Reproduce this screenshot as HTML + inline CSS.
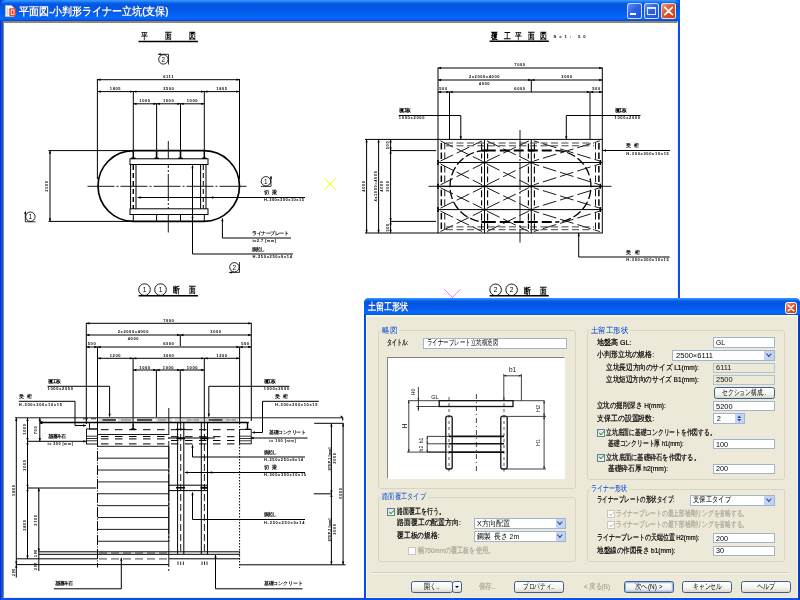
<!DOCTYPE html>
<html lang="ja"><head><meta charset="utf-8"><title>平面図</title>
<style>
*{box-sizing:border-box}
html,body{margin:0;padding:0}
body{will-change:transform;width:800px;height:600px;overflow:hidden;background:#fff;position:relative;font-family:"Liberation Sans",sans-serif;font-size:8px;color:#000}
.abs{position:absolute}
#win{position:absolute;left:0;top:0;width:680.3px;height:600px;background:linear-gradient(to right,#0019cf 0,#0a50ea 1.2px,#0a5df0 2px,#0a50ea 3px)}
#wtitle{position:absolute;left:0;top:0;width:680.3px;height:21.4px;border-radius:6px 6px 0 0;
 background:linear-gradient(to bottom,#3c96ff 0,#2c8aff 1.2px,#0a6af0 2.6px,#0355dd 4.6px,#0357e4 8px,#045ff0 14px,#0468fc 17px,#0466fa 19px,#0350e0 20.2px,#0340c8 21.4px)}
#wtitle .txt{position:absolute;left:19px;top:4.8px;color:#fff;font-weight:bold;font-size:10.5px;white-space:nowrap;filter:drop-shadow(0.8px 0.8px 0 #0a2a8a)}
#wclient{position:absolute;left:3px;top:21px;width:674.5px;height:576.5px;background:#fff;border-left:1.5px solid #8a8772;border-top:2px solid #8a8772;border-right:1px solid #f3f0e0;border-bottom:1px solid #f3f0e0}
.cb{position:absolute;top:3.4px;width:15px;height:15.3px;border:1px solid rgba(255,255,255,.75);border-radius:2.5px;background:linear-gradient(135deg,#5f8ff8 0%,#2f62e6 45%,#2350d8 100%)}
.cb.x{background:linear-gradient(135deg,#f0a080 0%,#e0552c 45%,#c83c14 100%)}
#cad{position:absolute;left:0;top:0}
#cad text{font-family:"Liberation Sans",sans-serif}
/* dialog */
#dlg{position:absolute;left:364px;top:297.7px;width:436px;height:302.3px;background:linear-gradient(to right,#0a3fdc 0,#0a50ea 1.5px,#0a50ea 433.5px,#0630c0 436px);border-radius:5px 5px 0 0}
#dtitle{position:absolute;left:0;top:0;width:100%;height:17.7px;border-radius:5px 5px 0 0;
 background:linear-gradient(to bottom,#3c96ff 0,#2c8aff 1px,#0a6af0 2.2px,#0355dd 4px,#0357e4 7px,#045ff0 11.5px,#0468fc 14px,#0466fa 16px,#0350e0 17px,#0340c8 18px)}
#dtitle .txt{position:absolute;left:4px;top:3px;color:#fff;font-weight:bold;font-size:10px;white-space:nowrap;filter:drop-shadow(0.8px 0.8px 0 #0a2a8a)}
#dbody{position:absolute;left:2.2px;top:17.7px;right:2.1px;bottom:2.3px;background:#ece9d8;border-top:2px solid #fbf7d6;border-left:1px solid #fbf7d6;border-right:0.8px solid #f6f2da;border-bottom:0.8px solid #f6f2da}
.grp{position:absolute;border:1px solid #d6d4c2;border-radius:3px}
.gl{position:absolute;color:#0046d5;background:#ece9d8;white-space:nowrap;padding:0 1.5px;line-height:10px;height:10px;overflow:visible}
.lb{position:absolute;white-space:nowrap;line-height:10px;height:10px;}
.lb.dis{color:#aca899}
svg.sx,svg.sc{overflow:visible;display:block}
svg.sc{display:inline-block;vertical-align:top}
.in svg.sx,.cmb svg.sx{margin-top:-0.6px}
.lb svg text{stroke:currentColor;stroke-width:0.2px}
svg.sx text,svg.sc text{fill:currentColor;font-family:"Liberation Sans",sans-serif;font-size:8px}
.in{position:absolute;background:#fff;border:1px solid #a0b5c9;height:10.5px;line-height:8.6px;padding-left:2.5px;font-size:8px;white-space:nowrap;overflow:hidden}
.in.dis{background:#ece9d8;border-color:#b3c3d3;color:#111}
.cmb{position:absolute;background:#fff;border:1px solid #a0b5c9;height:11px;line-height:9px;padding-left:2.5px;font-size:8px;white-space:nowrap;overflow:hidden}
.cmb i{position:absolute;right:0;top:0;bottom:0;width:9.4px;background:#c3d3fb}
.cmb i:after{content:"";position:absolute;left:2.5px;top:0.6px;width:2.7px;height:2.7px;border-right:1.7px solid #3b4a6b;border-bottom:1.7px solid #3b4a6b;transform:rotate(45deg)}
.btn{position:absolute;height:11.5px;border:1px solid #3d5f8c;border-radius:2.5px;background:linear-gradient(to bottom,#fff 0%,#f4f3ee 60%,#dcd8cb 100%);text-align:center;line-height:9.6px;font-size:8px;white-space:nowrap}
.btn.def{box-shadow:inset 0 0 0 1.2px #9fbdf0}
.chk{position:absolute;width:8px;height:8px;border:1px solid #5f7fa8;background:linear-gradient(135deg,#dcdcd7,#fff)}
.chk.on:after{content:"";position:absolute;left:1.7px;top:-0.2px;width:2.2px;height:4.2px;border-right:1.5px solid #21a121;border-bottom:1.5px solid #21a121;transform:rotate(42deg)}
.chk.dis{border-color:#cac8bb;background:#fff}
.chk.dis.on:after{border-color:#cac8bb}
</style></head><body>
<div class="abs" style="left:0;top:0;width:680.3px;height:8px;background:#10309a"></div>
<div id="win">
 <div id="wtitle">
  <svg class="abs" style="left:5px;top:5px" width="12" height="12" viewBox="0 0 12 12"><path d="M0.5,0.5 H6.5 L9,3 V11.5 H0.5Z" fill="#fff" stroke="#c9c9c9" stroke-width="0.6"/><rect x="4.3" y="3.2" width="6.6" height="8" rx="1" fill="#e8452a"/><rect x="6.2" y="5" width="2.8" height="4.4" fill="none" stroke="#fff" stroke-width="0.8"/><rect x="1.6" y="2.5" width="1.6" height="8" fill="#d8d8d8"/></svg>
  <div class="txt"><svg class="sx" width="149.5" height="13"><text x="0" y="9.6" textLength="149.5" lengthAdjust="spacingAndGlyphs" style="font-size:10.5px;font-weight:bold">平面図-小判形ライナー立坑(支保)</text></svg></div>
  <div class="cb" style="left:627.1px"><div class="abs" style="left:2.2px;top:8.3px;width:6px;height:2.6px;background:#fff"></div></div>
  <div class="cb" style="left:644px"><div class="abs" style="left:2.2px;top:2.8px;width:8.8px;height:8px;border:1px solid rgba(255,255,255,.85);border-top-width:2.2px"></div></div>
  <div class="cb x" style="left:660.9px"><svg class="abs" style="left:0;top:0" width="13" height="13.3" viewBox="0 0 13 13.3"><path d="M2.8,3.4 L10.4,10.6 M10.4,3.4 L2.8,10.6" stroke="#fff" stroke-width="1.7" stroke-linecap="round"/></svg></div>
 </div>
 <div id="wclient"></div>
</div>
<svg id="cad" width="800" height="600" viewBox="0 0 800 600">
<defs><clipPath id="cc"><rect x="5.5" y="24.5" width="671" height="572"/></clipPath></defs>
<g clip-path="url(#cc)">
<text x="140.6" y="38.6" font-size="9" text-anchor="start" font-weight="bold" textLength="6.8" lengthAdjust="spacingAndGlyphs" fill="#000">平</text>
<text x="164.8" y="38.6" font-size="9" text-anchor="start" font-weight="bold" textLength="6.8" lengthAdjust="spacingAndGlyphs" fill="#000">面</text>
<text x="189.2" y="38.6" font-size="9" text-anchor="start" font-weight="bold" textLength="6.8" lengthAdjust="spacingAndGlyphs" fill="#000">図</text>
<line x1="138.5" y1="41.4" x2="198" y2="41.4" stroke="#000" stroke-width="1.5"/>
<circle cx="163.4" cy="59.4" r="4.7" fill="#fff" stroke="#000" stroke-width="0.85"/>
<text x="163.4" y="61.6" font-size="6.4" text-anchor="middle" fill="#000">2</text>
<path d="M158.3,54.3 H168.5 V64.5" fill="none" stroke="#000" stroke-width="0.8"/>
<polygon points="157.8,54.3 160.8,53.3 160.8,55.3" fill="#000"/>
<line x1="97.4" y1="79.7" x2="239.5" y2="79.7" stroke="#000" stroke-width="1"/>
<polygon points="97.4,79.7 100.6,78.55 100.6,80.85" fill="#000"/>
<polygon points="239.5,79.7 236.3,78.55 236.3,80.85" fill="#000"/>
<text x="168.6" y="77.9" font-size="4" text-anchor="middle" font-weight="bold" letter-spacing="0.6" fill="#000">6111</text>
<line x1="97.4" y1="91.6" x2="239.5" y2="91.6" stroke="#000" stroke-width="1"/>
<polygon points="97.4,91.6 100.6,90.45 100.6,92.75" fill="#000"/>
<polygon points="239.5,91.6 236.3,90.45 236.3,92.75" fill="#000"/>
<polygon points="133.3,91.6 130.1,90.45 130.1,92.75" fill="#000"/>
<polygon points="133.3,91.6 136.5,90.45 136.5,92.75" fill="#000"/>
<polygon points="204.3,91.6 201.1,90.45 201.1,92.75" fill="#000"/>
<polygon points="204.3,91.6 207.5,90.45 207.5,92.75" fill="#000"/>
<text x="115.5" y="89.8" font-size="4" text-anchor="middle" font-weight="bold" letter-spacing="0.6" fill="#000">1805</text>
<text x="168.8" y="89.8" font-size="4" text-anchor="middle" font-weight="bold" letter-spacing="0.6" fill="#000">2500</text>
<text x="222" y="89.8" font-size="4" text-anchor="middle" font-weight="bold" letter-spacing="0.6" fill="#000">1805</text>
<line x1="133.3" y1="103.8" x2="204.3" y2="103.8" stroke="#000" stroke-width="1"/>
<polygon points="133.3,103.8 136.5,102.65 136.5,104.95" fill="#000"/>
<polygon points="204.3,103.8 201.1,102.65 201.1,104.95" fill="#000"/>
<polygon points="156.6,103.8 153.4,102.65 153.4,104.95" fill="#000"/>
<polygon points="156.6,103.8 159.8,102.65 159.8,104.95" fill="#000"/>
<polygon points="180.5,103.8 177.3,102.65 177.3,104.95" fill="#000"/>
<polygon points="180.5,103.8 183.7,102.65 183.7,104.95" fill="#000"/>
<text x="145" y="102.3" font-size="4" text-anchor="middle" font-weight="bold" letter-spacing="0.6" fill="#000">1000</text>
<text x="168.6" y="102.3" font-size="4" text-anchor="middle" font-weight="bold" letter-spacing="0.6" fill="#000">1000</text>
<text x="192.4" y="102.3" font-size="4" text-anchor="middle" font-weight="bold" letter-spacing="0.6" fill="#000">1000</text>
<line x1="97.4" y1="79" x2="97.4" y2="179" stroke="#000" stroke-width="1"/>
<line x1="239.5" y1="79" x2="239.5" y2="179" stroke="#000" stroke-width="1"/>
<line x1="133.3" y1="91" x2="133.3" y2="150.5" stroke="#000" stroke-width="1"/>
<line x1="204.3" y1="91" x2="204.3" y2="150.5" stroke="#000" stroke-width="1"/>
<line x1="156.6" y1="103.5" x2="156.6" y2="151" stroke="#000" stroke-width="1"/>
<line x1="180.5" y1="103.5" x2="180.5" y2="151" stroke="#000" stroke-width="1"/>
<line x1="50" y1="150.6" x2="50" y2="221.4" stroke="#000" stroke-width="1"/>
<polygon points="50,150.6 48.85,153.8 51.15,153.8" fill="#000"/>
<polygon points="50,221.4 48.85,218.2 51.15,218.2" fill="#000"/>
<line x1="48.5" y1="150.6" x2="133" y2="150.6" stroke="#000" stroke-width="1"/>
<line x1="48.5" y1="221.4" x2="133" y2="221.4" stroke="#000" stroke-width="1"/>
<text x="48.1" y="186" font-size="4" text-anchor="middle" font-weight="bold" letter-spacing="0.6" transform="rotate(-90 48.1 186)" fill="#000">2500</text>
<circle cx="30.4" cy="216.7" r="4.7" fill="#fff" stroke="#000" stroke-width="0.85"/>
<text x="30.4" y="218.9" font-size="6.4" text-anchor="middle" fill="#000">1</text>
<path d="M25.3,211.6 V221.8 H35.5" fill="none" stroke="#000" stroke-width="0.8"/>
<polygon points="25.3,211.1 24.3,214.1 26.3,214.1" fill="#000"/>
<path d="M133.4,150.6 H204.1 A35.4,35.4 0 0 1 204.1,221.4 H133.4 A35.4,35.4 0 0 1 133.4,150.6 Z" fill="none" stroke="#000" stroke-width="1.7"/>
<line x1="68.5" y1="186.3" x2="248.5" y2="186.3" stroke="#000" stroke-width="0.9" stroke-dasharray="0 19 27 2 2 2 27 2 2 2 27 2 2 2 27 2 2 2 27 2 2 2 27 2 2 2"/>
<line x1="168.3" y1="121" x2="168.3" y2="232.5" stroke="#000" stroke-width="0.9" stroke-dasharray="0 20 27 2 2 2 27 2 2 2 27 2 2 2 27 2 2 2"/>
<rect x="130" y="158.8" width="78" height="5.7" fill="#fff" stroke="#000" stroke-width="1"/>
<rect x="130" y="208.8" width="78" height="5.7" fill="#fff" stroke="#000" stroke-width="1"/>
<line x1="130.6" y1="164.5" x2="130.6" y2="208.8" stroke="#000" stroke-width="1"/>
<line x1="136" y1="164.5" x2="136" y2="208.8" stroke="#000" stroke-width="1"/>
<line x1="200.6" y1="164.5" x2="200.6" y2="208.8" stroke="#000" stroke-width="1"/>
<line x1="206" y1="164.5" x2="206" y2="208.8" stroke="#000" stroke-width="1"/>
<line x1="133.3" y1="165" x2="133.3" y2="208.5" stroke="#000" stroke-width="1.4" stroke-dasharray="5 3"/>
<line x1="203.3" y1="165" x2="203.3" y2="208.5" stroke="#000" stroke-width="1" stroke-dasharray="5 3"/>
<line x1="133.3" y1="151" x2="133.3" y2="158.8" stroke="#000" stroke-width="1.5"/>
<line x1="133.3" y1="214.5" x2="133.3" y2="221" stroke="#000" stroke-width="1"/>
<line x1="131.1" y1="158.3" x2="135.5" y2="158.3" stroke="#000" stroke-width="1.4"/>
<line x1="204.3" y1="151" x2="204.3" y2="158.8" stroke="#000" stroke-width="1.5"/>
<line x1="204.3" y1="214.5" x2="204.3" y2="221" stroke="#000" stroke-width="1"/>
<line x1="202.1" y1="158.3" x2="206.5" y2="158.3" stroke="#000" stroke-width="1.4"/>
<line x1="156.6" y1="151" x2="156.6" y2="158.8" stroke="#000" stroke-width="1.6"/>
<line x1="156.6" y1="214.5" x2="156.6" y2="221" stroke="#000" stroke-width="1"/>
<line x1="154.4" y1="158.3" x2="158.8" y2="158.3" stroke="#000" stroke-width="1.4"/>
<line x1="180.5" y1="151" x2="180.5" y2="158.8" stroke="#000" stroke-width="1.6"/>
<line x1="180.5" y1="214.5" x2="180.5" y2="221" stroke="#000" stroke-width="1"/>
<line x1="178.3" y1="158.3" x2="182.7" y2="158.3" stroke="#000" stroke-width="1.4"/>
<line x1="137.5" y1="197.5" x2="305" y2="197.5" stroke="#000" stroke-width="1"/>
<polygon points="137.5,197.5 140.7,196.35 140.7,198.65" fill="#000"/>
<polygon points="210,197.5 213.2,196.35 213.2,198.65" fill="#000"/>
<line x1="192.5" y1="165.5" x2="192.5" y2="254" stroke="#000" stroke-width="1"/>
<polygon points="192.5,165 191.35,168.2 193.65,168.2" fill="#000"/>
<polygon points="192.5,215 191.35,218.2 193.65,218.2" fill="#000"/>
<line x1="192.5" y1="254" x2="293" y2="254" stroke="#000" stroke-width="1"/>
<line x1="222.4" y1="218.5" x2="222.4" y2="238" stroke="#000" stroke-width="1"/>
<polygon points="222.4,218 221.25,221.2 223.55,221.2" fill="#000"/>
<line x1="222.4" y1="238" x2="291" y2="238" stroke="#000" stroke-width="1"/>
<circle cx="265.9" cy="181.3" r="4.7" fill="#fff" stroke="#000" stroke-width="0.85"/>
<text x="265.9" y="183.5" font-size="6.4" text-anchor="middle" fill="#000">1</text>
<path d="M271,176.2 V186.4 H260.8" fill="none" stroke="#000" stroke-width="0.8"/>
<polygon points="271,175.7 270,178.7 272,178.7" fill="#000"/>
<circle cx="234.4" cy="267.3" r="4.7" fill="#fff" stroke="#000" stroke-width="0.85"/>
<text x="234.4" y="269.5" font-size="6.4" text-anchor="middle" fill="#000">2</text>
<path d="M229.3,272.4 H239.5 V262.2" fill="none" stroke="#000" stroke-width="0.8"/>
<polygon points="228.8,272.4 231.8,271.4 231.8,273.4" fill="#000"/>
<text x="264" y="194.4" font-size="5.4" text-anchor="start" font-weight="bold" fill="#000">切</text>
<text x="272" y="194.4" font-size="5.4" text-anchor="start" font-weight="bold" fill="#000">梁</text>
<text x="264" y="200.6" font-size="4" text-anchor="start" font-weight="bold" textLength="40" lengthAdjust="spacing" fill="#000">H-300x300x10x15</text>
<text x="252.4" y="234.8" font-size="5.2" text-anchor="start" font-weight="bold" textLength="36.6" lengthAdjust="spacing" fill="#000">ライナープレート</text>
<text x="252.4" y="241.9" font-size="4" text-anchor="start" font-weight="bold" textLength="23.6" lengthAdjust="spacing" fill="#000">t=2.7 [mm]</text>
<text x="252.4" y="250.6" font-size="5.2" text-anchor="start" font-weight="bold" textLength="12.6" lengthAdjust="spacing" fill="#000">腹起し</text>
<text x="252.4" y="257.7" font-size="4" text-anchor="start" font-weight="bold" textLength="39.6" lengthAdjust="spacing" fill="#000">H-250x250x9x14</text>
<line x1="324" y1="178" x2="336" y2="190" stroke="#ffff00" stroke-width="1"/>
<line x1="336" y1="178" x2="324" y2="190" stroke="#ffff00" stroke-width="1"/>
<line x1="444.4" y1="289.4" x2="460.4" y2="305.4" stroke="#ff70ff" stroke-width="1"/>
<line x1="460.4" y1="289.4" x2="444.4" y2="305.4" stroke="#ff70ff" stroke-width="1"/>
<text x="490.6" y="39" font-size="9" text-anchor="start" font-weight="bold" textLength="6.8" lengthAdjust="spacingAndGlyphs" fill="#000">覆</text>
<text x="503.6" y="39" font-size="9" text-anchor="start" font-weight="bold" textLength="6.8" lengthAdjust="spacingAndGlyphs" fill="#000">工</text>
<text x="515.2" y="39" font-size="9" text-anchor="start" font-weight="bold" textLength="6.8" lengthAdjust="spacingAndGlyphs" fill="#000">平</text>
<text x="527.8" y="39" font-size="9" text-anchor="start" font-weight="bold" textLength="6.8" lengthAdjust="spacingAndGlyphs" fill="#000">面</text>
<text x="539.6" y="39" font-size="9" text-anchor="start" font-weight="bold" textLength="6.8" lengthAdjust="spacingAndGlyphs" fill="#000">図</text>
<line x1="489.6" y1="41.2" x2="548.8" y2="41.2" stroke="#000" stroke-width="1.5"/>
<text x="553.6" y="38.2" font-size="4.2" text-anchor="start" font-weight="bold" textLength="32" lengthAdjust="spacing" fill="#000">S=1: 50</text>
<line x1="438" y1="68" x2="602.3" y2="68" stroke="#000" stroke-width="1"/>
<polygon points="438,68 441.2,66.85 441.2,69.15" fill="#000"/>
<polygon points="602.3,68 599.1,66.85 599.1,69.15" fill="#000"/>
<text x="520" y="66.4" font-size="4" text-anchor="middle" font-weight="bold" letter-spacing="0.6" fill="#000">7000</text>
<line x1="438" y1="80" x2="602.3" y2="80" stroke="#000" stroke-width="1"/>
<polygon points="438,80 441.2,78.85 441.2,81.15" fill="#000"/>
<polygon points="602.3,80 599.1,78.85 599.1,81.15" fill="#000"/>
<polygon points="531.3,80 528.1,78.85 528.1,81.15" fill="#000"/>
<polygon points="531.3,80 534.5,78.85 534.5,81.15" fill="#000"/>
<text x="484.5" y="78.4" font-size="4" text-anchor="middle" font-weight="bold" letter-spacing="0.6" fill="#000">2x2000=4000</text>
<text x="484.5" y="85.2" font-size="4" text-anchor="middle" font-weight="bold" letter-spacing="0.6" fill="#000">4000</text>
<text x="567" y="78.4" font-size="4" text-anchor="middle" font-weight="bold" letter-spacing="0.6" fill="#000">3000</text>
<line x1="438" y1="92" x2="602.3" y2="92" stroke="#000" stroke-width="1"/>
<polygon points="438,92 441.2,90.85 441.2,93.15" fill="#000"/>
<polygon points="602.3,92 599.1,90.85 599.1,93.15" fill="#000"/>
<polygon points="449.5,92 446.3,90.85 446.3,93.15" fill="#000"/>
<polygon points="449.5,92 452.7,90.85 452.7,93.15" fill="#000"/>
<polygon points="590,92 586.8,90.85 586.8,93.15" fill="#000"/>
<polygon points="590,92 593.2,90.85 593.2,93.15" fill="#000"/>
<text x="443.5" y="90.4" font-size="4" text-anchor="middle" font-weight="bold" letter-spacing="0.6" fill="#000">500</text>
<text x="520" y="90.4" font-size="4" text-anchor="middle" font-weight="bold" letter-spacing="0.6" fill="#000">6000</text>
<text x="596.5" y="90.4" font-size="4" text-anchor="middle" font-weight="bold" letter-spacing="0.6" fill="#000">500</text>
<line x1="531.3" y1="80" x2="531.3" y2="92" stroke="#000" stroke-width="1"/>
<line x1="438" y1="67.5" x2="438" y2="139.4" stroke="#000" stroke-width="1"/>
<line x1="602.3" y1="67.5" x2="602.3" y2="139.4" stroke="#000" stroke-width="1"/>
<line x1="449.5" y1="92" x2="449.5" y2="139.4" stroke="#000" stroke-width="1"/>
<line x1="590" y1="92" x2="590" y2="139.4" stroke="#000" stroke-width="1"/>
<line x1="398.8" y1="115.5" x2="460.8" y2="115.5" stroke="#000" stroke-width="1"/>
<line x1="460.8" y1="115.5" x2="460.8" y2="139.4" stroke="#000" stroke-width="1"/>
<polygon points="460.8,139.4 459.65,136.2 461.95,136.2" fill="#000"/>
<text x="398.8" y="112.2" font-size="5.2" text-anchor="start" font-weight="bold" textLength="12.5" lengthAdjust="spacing" fill="#000">覆工板</text>
<text x="398.8" y="119.2" font-size="4" text-anchor="start" font-weight="bold" textLength="25.7" lengthAdjust="spacing" fill="#000">1000x2000</text>
<line x1="566.3" y1="115.5" x2="640.5" y2="115.5" stroke="#000" stroke-width="1"/>
<line x1="566.3" y1="115.5" x2="566.3" y2="139.4" stroke="#000" stroke-width="1"/>
<polygon points="566.3,139.4 565.15,136.2 567.45,136.2" fill="#000"/>
<text x="614.5" y="112.2" font-size="5.2" text-anchor="start" font-weight="bold" textLength="12.5" lengthAdjust="spacing" fill="#000">覆工板</text>
<text x="614.5" y="119.2" font-size="4" text-anchor="start" font-weight="bold" textLength="25.5" lengthAdjust="spacing" fill="#000">1000x2000</text>
<line x1="602.3" y1="150.5" x2="670" y2="150.5" stroke="#000" stroke-width="1"/>
<polygon points="602.8,150.5 606,149.35 606,151.65" fill="#000"/>
<text x="626.3" y="147.2" font-size="5.2" text-anchor="start" font-weight="bold" fill="#000">受</text>
<text x="633.5" y="147.2" font-size="5.2" text-anchor="start" font-weight="bold" fill="#000">桁</text>
<text x="626.3" y="154.8" font-size="4" text-anchor="start" font-weight="bold" textLength="42.5" lengthAdjust="spacing" fill="#000">H-300x300x10x15</text>
<line x1="578.7" y1="233" x2="578.7" y2="257" stroke="#000" stroke-width="1"/>
<polygon points="578.7,233 577.55,236.2 579.85,236.2" fill="#000"/>
<line x1="578.7" y1="257" x2="669.6" y2="257" stroke="#000" stroke-width="1"/>
<text x="626.3" y="253.7" font-size="5.2" text-anchor="start" font-weight="bold" fill="#000">受</text>
<text x="634.5" y="253.7" font-size="5.2" text-anchor="start" font-weight="bold" fill="#000">桁</text>
<text x="626.3" y="261.1" font-size="4" text-anchor="start" font-weight="bold" textLength="42.4" lengthAdjust="spacing" fill="#000">H-300x300x10x15</text>
<line x1="366.6" y1="139.4" x2="366.6" y2="233" stroke="#000" stroke-width="1"/>
<polygon points="366.6,139.4 365.45,142.6 367.75,142.6" fill="#000"/>
<polygon points="366.6,233 365.45,229.8 367.75,229.8" fill="#000"/>
<line x1="378.6" y1="139.4" x2="378.6" y2="233" stroke="#000" stroke-width="1"/>
<polygon points="378.6,139.4 377.45,142.6 379.75,142.6" fill="#000"/>
<polygon points="378.6,233 377.45,229.8 379.75,229.8" fill="#000"/>
<line x1="390.6" y1="139.4" x2="390.6" y2="233" stroke="#000" stroke-width="1"/>
<polygon points="390.6,139.4 389.45,142.6 391.75,142.6" fill="#000"/>
<polygon points="390.6,233 389.45,229.8 391.75,229.8" fill="#000"/>
<polygon points="390.6,150.6 389.45,153.8 391.75,153.8" fill="#000"/>
<polygon points="390.6,150.6 389.45,147.4 391.75,147.4" fill="#000"/>
<polygon points="390.6,221.4 389.45,224.6 391.75,224.6" fill="#000"/>
<polygon points="390.6,221.4 389.45,218.2 391.75,218.2" fill="#000"/>
<line x1="365" y1="139.4" x2="438" y2="139.4" stroke="#000" stroke-width="1"/>
<line x1="365" y1="233" x2="438" y2="233" stroke="#000" stroke-width="1"/>
<line x1="390.6" y1="150.6" x2="436" y2="150.6" stroke="#000" stroke-width="1"/>
<line x1="390.6" y1="221.4" x2="436" y2="221.4" stroke="#000" stroke-width="1"/>
<text x="364.9" y="186" font-size="4" text-anchor="middle" font-weight="bold" letter-spacing="0.6" transform="rotate(-90 364.9 186)" fill="#000">4000</text>
<text x="377.1" y="186" font-size="4" text-anchor="middle" font-weight="bold" letter-spacing="0.6" transform="rotate(-90 377.1 186)" fill="#000">4x1000=4000</text>
<text x="383.1" y="186" font-size="4" text-anchor="middle" font-weight="bold" letter-spacing="0.6" transform="rotate(-90 383.1 186)" fill="#000">4000</text>
<text x="389.1" y="186" font-size="4" text-anchor="middle" font-weight="bold" letter-spacing="0.6" transform="rotate(-90 389.1 186)" fill="#000">3000</text>
<text x="389.1" y="145" font-size="4" text-anchor="middle" font-weight="bold" letter-spacing="0.6" transform="rotate(-90 389.1 145)" fill="#000">500</text>
<text x="389.1" y="227.3" font-size="4" text-anchor="middle" font-weight="bold" letter-spacing="0.6" transform="rotate(-90 389.1 227.3)" fill="#000">500</text>
<rect x="438" y="139.4" width="164.3" height="93.6" fill="none" stroke="#000" stroke-width="1"/>
<line x1="484.5" y1="139.4" x2="484.5" y2="233" stroke="#000" stroke-width="1"/>
<line x1="531.3" y1="139.4" x2="531.3" y2="233" stroke="#000" stroke-width="1"/>
<line x1="438" y1="162.5" x2="602.3" y2="162.5" stroke="#000" stroke-width="1"/>
<line x1="438" y1="209.6" x2="602.3" y2="209.6" stroke="#000" stroke-width="1"/>
<line x1="438" y1="186.3" x2="602.3" y2="186.3" stroke="#000" stroke-width="1"/>
<line x1="440.5" y1="140.9" x2="482" y2="161" stroke="#000" stroke-width="0.9" stroke-dasharray="14 4"/>
<line x1="440.5" y1="161" x2="482" y2="140.9" stroke="#000" stroke-width="0.9" stroke-dasharray="14 4"/>
<line x1="440.5" y1="164" x2="482" y2="184.8" stroke="#000" stroke-width="0.9" stroke-dasharray="14 4"/>
<line x1="440.5" y1="184.8" x2="482" y2="164" stroke="#000" stroke-width="0.9" stroke-dasharray="14 4"/>
<line x1="440.5" y1="187.8" x2="482" y2="208.1" stroke="#000" stroke-width="0.9" stroke-dasharray="14 4"/>
<line x1="440.5" y1="208.1" x2="482" y2="187.8" stroke="#000" stroke-width="0.9" stroke-dasharray="14 4"/>
<line x1="440.5" y1="211.1" x2="482" y2="231.5" stroke="#000" stroke-width="0.9" stroke-dasharray="14 4"/>
<line x1="440.5" y1="231.5" x2="482" y2="211.1" stroke="#000" stroke-width="0.9" stroke-dasharray="14 4"/>
<line x1="487" y1="140.9" x2="528.8" y2="161" stroke="#000" stroke-width="0.9" stroke-dasharray="14 4"/>
<line x1="487" y1="161" x2="528.8" y2="140.9" stroke="#000" stroke-width="0.9" stroke-dasharray="14 4"/>
<line x1="487" y1="164" x2="528.8" y2="184.8" stroke="#000" stroke-width="0.9" stroke-dasharray="14 4"/>
<line x1="487" y1="184.8" x2="528.8" y2="164" stroke="#000" stroke-width="0.9" stroke-dasharray="14 4"/>
<line x1="487" y1="187.8" x2="528.8" y2="208.1" stroke="#000" stroke-width="0.9" stroke-dasharray="14 4"/>
<line x1="487" y1="208.1" x2="528.8" y2="187.8" stroke="#000" stroke-width="0.9" stroke-dasharray="14 4"/>
<line x1="487" y1="211.1" x2="528.8" y2="231.5" stroke="#000" stroke-width="0.9" stroke-dasharray="14 4"/>
<line x1="487" y1="231.5" x2="528.8" y2="211.1" stroke="#000" stroke-width="0.9" stroke-dasharray="14 4"/>
<line x1="533.8" y1="140.9" x2="599.8" y2="161" stroke="#000" stroke-width="0.9" stroke-dasharray="14 4" stroke-dashoffset="8.5"/>
<line x1="533.8" y1="161" x2="599.8" y2="140.9" stroke="#000" stroke-width="0.9" stroke-dasharray="14 4" stroke-dashoffset="8.5"/>
<line x1="533.8" y1="164" x2="599.8" y2="184.8" stroke="#000" stroke-width="0.9" stroke-dasharray="14 4" stroke-dashoffset="8.5"/>
<line x1="533.8" y1="184.8" x2="599.8" y2="164" stroke="#000" stroke-width="0.9" stroke-dasharray="14 4" stroke-dashoffset="8.5"/>
<line x1="533.8" y1="187.8" x2="599.8" y2="208.1" stroke="#000" stroke-width="0.9" stroke-dasharray="14 4" stroke-dashoffset="8.5"/>
<line x1="533.8" y1="208.1" x2="599.8" y2="187.8" stroke="#000" stroke-width="0.9" stroke-dasharray="14 4" stroke-dashoffset="8.5"/>
<line x1="533.8" y1="211.1" x2="599.8" y2="231.5" stroke="#000" stroke-width="0.9" stroke-dasharray="14 4" stroke-dashoffset="8.5"/>
<line x1="533.8" y1="231.5" x2="599.8" y2="211.1" stroke="#000" stroke-width="0.9" stroke-dasharray="14 4" stroke-dashoffset="8.5"/>
<line x1="446" y1="143" x2="594" y2="143" stroke="#444" stroke-width="1" stroke-dasharray="7 3.5"/>
<line x1="446" y1="145.8" x2="594" y2="145.8" stroke="#444" stroke-width="1" stroke-dasharray="7 3.5"/>
<line x1="446" y1="226.9" x2="594" y2="226.9" stroke="#444" stroke-width="1" stroke-dasharray="7 3.5"/>
<line x1="446" y1="229.7" x2="594" y2="229.7" stroke="#444" stroke-width="1" stroke-dasharray="7 3.5"/>
<line x1="441.35" y1="142.9" x2="441.35" y2="159" stroke="#000" stroke-width="1.5" stroke-dasharray="6.5 3"/>
<line x1="441.35" y1="166" x2="441.35" y2="182.8" stroke="#000" stroke-width="1.5" stroke-dasharray="6.5 3"/>
<line x1="441.35" y1="189.8" x2="441.35" y2="206.1" stroke="#000" stroke-width="1.5" stroke-dasharray="6.5 3"/>
<line x1="441.35" y1="213.1" x2="441.35" y2="229.5" stroke="#000" stroke-width="1.5" stroke-dasharray="6.5 3"/>
<line x1="444.75" y1="142.9" x2="444.75" y2="159" stroke="#000" stroke-width="0.9" stroke-dasharray="6.5 3"/>
<line x1="444.75" y1="166" x2="444.75" y2="182.8" stroke="#000" stroke-width="0.9" stroke-dasharray="6.5 3"/>
<line x1="444.75" y1="189.8" x2="444.75" y2="206.1" stroke="#000" stroke-width="0.9" stroke-dasharray="6.5 3"/>
<line x1="444.75" y1="213.1" x2="444.75" y2="229.5" stroke="#000" stroke-width="0.9" stroke-dasharray="6.5 3"/>
<line x1="595.5" y1="142.9" x2="595.5" y2="159" stroke="#000" stroke-width="0.9" stroke-dasharray="6.5 3"/>
<line x1="595.5" y1="166" x2="595.5" y2="182.8" stroke="#000" stroke-width="0.9" stroke-dasharray="6.5 3"/>
<line x1="595.5" y1="189.8" x2="595.5" y2="206.1" stroke="#000" stroke-width="0.9" stroke-dasharray="6.5 3"/>
<line x1="595.5" y1="213.1" x2="595.5" y2="229.5" stroke="#000" stroke-width="0.9" stroke-dasharray="6.5 3"/>
<line x1="598.9" y1="142.9" x2="598.9" y2="159" stroke="#000" stroke-width="1.5" stroke-dasharray="6.5 3"/>
<line x1="598.9" y1="166" x2="598.9" y2="182.8" stroke="#000" stroke-width="1.5" stroke-dasharray="6.5 3"/>
<line x1="598.9" y1="189.8" x2="598.9" y2="206.1" stroke="#000" stroke-width="1.5" stroke-dasharray="6.5 3"/>
<line x1="598.9" y1="213.1" x2="598.9" y2="229.5" stroke="#000" stroke-width="1.5" stroke-dasharray="6.5 3"/>
<line x1="481.6" y1="143.4" x2="481.6" y2="158.5" stroke="#000" stroke-width="1.1" stroke-dasharray="7 3"/>
<line x1="481.6" y1="166.5" x2="481.6" y2="182.3" stroke="#000" stroke-width="1.1" stroke-dasharray="7 3"/>
<line x1="481.6" y1="190.3" x2="481.6" y2="205.6" stroke="#000" stroke-width="1.1" stroke-dasharray="7 3"/>
<line x1="481.6" y1="213.6" x2="481.6" y2="229" stroke="#000" stroke-width="1.1" stroke-dasharray="7 3"/>
<line x1="487.6" y1="143.4" x2="487.6" y2="158.5" stroke="#000" stroke-width="1.1" stroke-dasharray="7 3"/>
<line x1="487.6" y1="166.5" x2="487.6" y2="182.3" stroke="#000" stroke-width="1.1" stroke-dasharray="7 3"/>
<line x1="487.6" y1="190.3" x2="487.6" y2="205.6" stroke="#000" stroke-width="1.1" stroke-dasharray="7 3"/>
<line x1="487.6" y1="213.6" x2="487.6" y2="229" stroke="#000" stroke-width="1.1" stroke-dasharray="7 3"/>
<line x1="528.4" y1="143.4" x2="528.4" y2="158.5" stroke="#000" stroke-width="1.1" stroke-dasharray="7 3"/>
<line x1="528.4" y1="166.5" x2="528.4" y2="182.3" stroke="#000" stroke-width="1.1" stroke-dasharray="7 3"/>
<line x1="528.4" y1="190.3" x2="528.4" y2="205.6" stroke="#000" stroke-width="1.1" stroke-dasharray="7 3"/>
<line x1="528.4" y1="213.6" x2="528.4" y2="229" stroke="#000" stroke-width="1.1" stroke-dasharray="7 3"/>
<line x1="534.4" y1="143.4" x2="534.4" y2="158.5" stroke="#000" stroke-width="1.1" stroke-dasharray="7 3"/>
<line x1="534.4" y1="166.5" x2="534.4" y2="182.3" stroke="#000" stroke-width="1.1" stroke-dasharray="7 3"/>
<line x1="534.4" y1="190.3" x2="534.4" y2="205.6" stroke="#000" stroke-width="1.1" stroke-dasharray="7 3"/>
<line x1="534.4" y1="213.6" x2="534.4" y2="229" stroke="#000" stroke-width="1.1" stroke-dasharray="7 3"/>
<path d="M485.75,150.5 A35.75,35.75 0 0 0 485.75,222" fill="none" stroke="#000" stroke-width="1.3" stroke-dasharray="9 3"/>
<path d="M555.25,150.5 A35.75,35.75 0 0 1 555.25,222" fill="none" stroke="#000" stroke-width="1.3" stroke-dasharray="9 3"/>
<line x1="485.75" y1="150.5" x2="555.25" y2="150.5" stroke="#000" stroke-width="2" stroke-dasharray="10 4"/>
<line x1="485.75" y1="222" x2="555.25" y2="222" stroke="#000" stroke-width="2" stroke-dasharray="10 4"/>
<line x1="481.5" y1="150.5" x2="487.5" y2="150.5" stroke="#000" stroke-width="1.8"/>
<line x1="481.5" y1="162.5" x2="487.5" y2="162.5" stroke="#000" stroke-width="1.8"/>
<line x1="481.5" y1="186.3" x2="487.5" y2="186.3" stroke="#000" stroke-width="1.8"/>
<line x1="481.5" y1="209.6" x2="487.5" y2="209.6" stroke="#000" stroke-width="1.8"/>
<line x1="481.5" y1="222" x2="487.5" y2="222" stroke="#000" stroke-width="1.8"/>
<line x1="528.3" y1="150.5" x2="534.3" y2="150.5" stroke="#000" stroke-width="1.8"/>
<line x1="528.3" y1="162.5" x2="534.3" y2="162.5" stroke="#000" stroke-width="1.8"/>
<line x1="528.3" y1="186.3" x2="534.3" y2="186.3" stroke="#000" stroke-width="1.8"/>
<line x1="528.3" y1="209.6" x2="534.3" y2="209.6" stroke="#000" stroke-width="1.8"/>
<line x1="528.3" y1="222" x2="534.3" y2="222" stroke="#000" stroke-width="1.8"/>
<line x1="438" y1="160" x2="438" y2="165" stroke="#000" stroke-width="1.6"/>
<line x1="438" y1="183.8" x2="438" y2="188.8" stroke="#000" stroke-width="1.6"/>
<line x1="438" y1="207.1" x2="438" y2="212.1" stroke="#000" stroke-width="1.6"/>
<line x1="600.3" y1="160" x2="600.3" y2="165" stroke="#000" stroke-width="1.6"/>
<line x1="600.3" y1="183.8" x2="600.3" y2="188.8" stroke="#000" stroke-width="1.6"/>
<line x1="600.3" y1="207.1" x2="600.3" y2="212.1" stroke="#000" stroke-width="1.6"/>
<line x1="428.5" y1="186.3" x2="611.5" y2="186.3" stroke="#000" stroke-width="0.9"/>
<line x1="520" y1="130" x2="520" y2="242.5" stroke="#000" stroke-width="0.9" stroke-dasharray="27 2 2 2"/>
<circle cx="495.6" cy="289.8" r="5.8" fill="#fff" stroke="#000" stroke-width="0.9"/>
<circle cx="511.6" cy="289.8" r="5.8" fill="#fff" stroke="#000" stroke-width="0.9"/>
<text x="495.6" y="292.2" font-size="6.5" text-anchor="middle" fill="#000">2</text>
<text x="511.6" y="292.2" font-size="6.5" text-anchor="middle" fill="#000">2</text>
<text x="524" y="293.5" font-size="9" text-anchor="start" font-weight="bold" textLength="6.8" lengthAdjust="spacingAndGlyphs" fill="#000">断</text>
<text x="540.4" y="293.5" font-size="9" text-anchor="start" font-weight="bold" textLength="6.8" lengthAdjust="spacingAndGlyphs" fill="#000">面</text>
<line x1="489.6" y1="295.8" x2="548.8" y2="295.8" stroke="#000" stroke-width="1.6"/>
<circle cx="144.5" cy="289.6" r="5.8" fill="#fff" stroke="#000" stroke-width="0.9"/>
<circle cx="160.5" cy="289.6" r="5.8" fill="#fff" stroke="#000" stroke-width="0.9"/>
<text x="144.5" y="292" font-size="6.5" text-anchor="middle" fill="#000">1</text>
<text x="160.5" y="292" font-size="6.5" text-anchor="middle" fill="#000">1</text>
<text x="172.8" y="293.4" font-size="9" text-anchor="start" font-weight="bold" textLength="6.8" lengthAdjust="spacingAndGlyphs" fill="#000">断</text>
<text x="189" y="293.4" font-size="9" text-anchor="start" font-weight="bold" textLength="6.8" lengthAdjust="spacingAndGlyphs" fill="#000">面</text>
<line x1="138.6" y1="295.8" x2="198" y2="295.8" stroke="#000" stroke-width="1.6"/>
<line x1="86.3" y1="323.3" x2="251.3" y2="323.3" stroke="#000" stroke-width="1"/>
<polygon points="86.3,323.3 89.5,322.15 89.5,324.45" fill="#000"/>
<polygon points="251.3,323.3 248.1,322.15 248.1,324.45" fill="#000"/>
<text x="168.8" y="321.8" font-size="4" text-anchor="middle" font-weight="bold" letter-spacing="0.6" fill="#000">7000</text>
<line x1="86.3" y1="335" x2="251.3" y2="335" stroke="#000" stroke-width="1"/>
<polygon points="86.3,335 89.5,333.85 89.5,336.15" fill="#000"/>
<polygon points="251.3,335 248.1,333.85 248.1,336.15" fill="#000"/>
<polygon points="180.3,335 177.1,333.85 177.1,336.15" fill="#000"/>
<polygon points="180.3,335 183.5,333.85 183.5,336.15" fill="#000"/>
<text x="133.4" y="333.4" font-size="4" text-anchor="middle" font-weight="bold" letter-spacing="0.6" fill="#000">2x2000=4000</text>
<text x="133.4" y="340" font-size="4" text-anchor="middle" font-weight="bold" letter-spacing="0.6" fill="#000">4000</text>
<text x="216" y="333.4" font-size="4" text-anchor="middle" font-weight="bold" letter-spacing="0.6" fill="#000">3000</text>
<line x1="86.3" y1="347" x2="251.3" y2="347" stroke="#000" stroke-width="1"/>
<polygon points="86.3,347 89.5,345.85 89.5,348.15" fill="#000"/>
<polygon points="251.3,347 248.1,345.85 248.1,348.15" fill="#000"/>
<polygon points="97.5,347 94.3,345.85 94.3,348.15" fill="#000"/>
<polygon points="97.5,347 100.7,345.85 100.7,348.15" fill="#000"/>
<polygon points="239.6,347 236.4,345.85 236.4,348.15" fill="#000"/>
<polygon points="239.6,347 242.8,345.85 242.8,348.15" fill="#000"/>
<text x="92" y="345.4" font-size="4" text-anchor="middle" font-weight="bold" letter-spacing="0.6" fill="#000">500</text>
<text x="168.8" y="345.4" font-size="4" text-anchor="middle" font-weight="bold" letter-spacing="0.6" fill="#000">6000</text>
<text x="245.4" y="345.4" font-size="4" text-anchor="middle" font-weight="bold" letter-spacing="0.6" fill="#000">500</text>
<line x1="97.5" y1="358.3" x2="239.6" y2="358.3" stroke="#000" stroke-width="1"/>
<polygon points="97.5,358.3 100.7,357.15 100.7,359.45" fill="#000"/>
<polygon points="239.6,358.3 236.4,357.15 236.4,359.45" fill="#000"/>
<polygon points="133.1,358.3 129.9,357.15 129.9,359.45" fill="#000"/>
<polygon points="133.1,358.3 136.3,357.15 136.3,359.45" fill="#000"/>
<polygon points="204.3,358.3 201.1,357.15 201.1,359.45" fill="#000"/>
<polygon points="204.3,358.3 207.5,357.15 207.5,359.45" fill="#000"/>
<text x="115.4" y="356.8" font-size="4" text-anchor="middle" font-weight="bold" letter-spacing="0.6" fill="#000">1200</text>
<text x="168.8" y="356.8" font-size="4" text-anchor="middle" font-weight="bold" letter-spacing="0.6" fill="#000">3000</text>
<text x="222" y="356.8" font-size="4" text-anchor="middle" font-weight="bold" letter-spacing="0.6" fill="#000">1200</text>
<line x1="133.1" y1="370" x2="204.3" y2="370" stroke="#000" stroke-width="1"/>
<polygon points="133.1,370 136.3,368.85 136.3,371.15" fill="#000"/>
<polygon points="204.3,370 201.1,368.85 201.1,371.15" fill="#000"/>
<polygon points="156.4,370 153.2,368.85 153.2,371.15" fill="#000"/>
<polygon points="156.4,370 159.6,368.85 159.6,371.15" fill="#000"/>
<polygon points="180.3,370 177.1,368.85 177.1,371.15" fill="#000"/>
<polygon points="180.3,370 183.5,368.85 183.5,371.15" fill="#000"/>
<text x="145" y="368.5" font-size="4" text-anchor="middle" font-weight="bold" letter-spacing="0.6" fill="#000">1000</text>
<text x="168.5" y="368.5" font-size="4" text-anchor="middle" font-weight="bold" letter-spacing="0.6" fill="#000">1000</text>
<text x="192.4" y="368.5" font-size="4" text-anchor="middle" font-weight="bold" letter-spacing="0.6" fill="#000">1000</text>
<line x1="180.3" y1="335" x2="180.3" y2="346" stroke="#000" stroke-width="1"/>
<line x1="86.3" y1="322.8" x2="86.3" y2="424" stroke="#000" stroke-width="1"/>
<line x1="251.3" y1="322.8" x2="251.3" y2="421" stroke="#000" stroke-width="1"/>
<line x1="97.5" y1="347" x2="97.5" y2="424" stroke="#000" stroke-width="1"/>
<line x1="239.6" y1="347" x2="239.6" y2="424" stroke="#000" stroke-width="1"/>
<line x1="133.1" y1="358.3" x2="133.1" y2="430" stroke="#000" stroke-width="1"/>
<line x1="204.3" y1="358.3" x2="204.3" y2="424" stroke="#000" stroke-width="1"/>
<line x1="156.4" y1="370" x2="156.4" y2="417" stroke="#000" stroke-width="1"/>
<line x1="180.3" y1="370" x2="180.3" y2="424" stroke="#000" stroke-width="1"/>
<line x1="47.5" y1="386.3" x2="109.6" y2="386.3" stroke="#000" stroke-width="1"/>
<line x1="109.6" y1="386.3" x2="109.6" y2="416.5" stroke="#000" stroke-width="1"/>
<polygon points="109.6,417 108.45,413.8 110.75,413.8" fill="#000"/>
<text x="47.5" y="382.8" font-size="5.2" text-anchor="start" font-weight="bold" textLength="13" lengthAdjust="spacing" fill="#000">覆工板</text>
<text x="47.5" y="389.8" font-size="4" text-anchor="start" font-weight="bold" textLength="25.5" lengthAdjust="spacing" fill="#000">1000x2000</text>
<line x1="18.8" y1="401.3" x2="75" y2="401.3" stroke="#000" stroke-width="1"/>
<line x1="75" y1="401.3" x2="75" y2="425.5" stroke="#000" stroke-width="1"/>
<line x1="75" y1="425.5" x2="86" y2="425.5" stroke="#000" stroke-width="1"/>
<polygon points="86.3,425.5 83.1,424.35 83.1,426.65" fill="#000"/>
<text x="18.8" y="398" font-size="5.2" text-anchor="start" font-weight="bold" fill="#000">受</text>
<text x="26.6" y="398" font-size="5.2" text-anchor="start" font-weight="bold" fill="#000">桁</text>
<text x="18.8" y="405.8" font-size="4" text-anchor="start" font-weight="bold" textLength="43.2" lengthAdjust="spacing" fill="#000">H-300x300x10x15</text>
<line x1="208.8" y1="386.3" x2="289.5" y2="386.3" stroke="#000" stroke-width="1"/>
<line x1="208.8" y1="386.3" x2="208.8" y2="416.5" stroke="#000" stroke-width="1"/>
<polygon points="208.8,417 207.65,413.8 209.95,413.8" fill="#000"/>
<text x="263.8" y="382.8" font-size="5.2" text-anchor="start" font-weight="bold" textLength="12" lengthAdjust="spacing" fill="#000">覆工板</text>
<text x="263.8" y="389.8" font-size="4" text-anchor="start" font-weight="bold" textLength="25.3" lengthAdjust="spacing" fill="#000">1000x2000</text>
<line x1="262.5" y1="401.3" x2="318.8" y2="401.3" stroke="#000" stroke-width="1"/>
<line x1="262.5" y1="401.3" x2="262.5" y2="432.5" stroke="#000" stroke-width="1"/>
<line x1="262.5" y1="432.5" x2="252.5" y2="432.5" stroke="#000" stroke-width="1"/>
<polygon points="251.8,432.5 255,431.35 255,433.65" fill="#000"/>
<text x="275" y="398" font-size="5.2" text-anchor="start" font-weight="bold" fill="#000">受</text>
<text x="283" y="398" font-size="5.2" text-anchor="start" font-weight="bold" fill="#000">桁</text>
<text x="275" y="405.8" font-size="4" text-anchor="start" font-weight="bold" textLength="42.5" lengthAdjust="spacing" fill="#000">H-300x300x10x15</text>
<line x1="15" y1="417.8" x2="342" y2="417.8" stroke="#000" stroke-width="0.9"/>
<path d="M340.5,416 Q343.5,417 342.6,420.5" fill="none" stroke="#000" stroke-width="1.1"/>
<line x1="41" y1="422.5" x2="248.8" y2="422.5" stroke="#000" stroke-width="1.5"/>
<line x1="99" y1="419" x2="238" y2="419" stroke="#888" stroke-width="0.6" stroke-dasharray="16 3"/>
<line x1="99" y1="421" x2="238" y2="421" stroke="#888" stroke-width="0.6" stroke-dasharray="16 3"/>
<line x1="102.5" y1="420" x2="116" y2="420" stroke="#222" stroke-width="1.3"/>
<line x1="137" y1="420" x2="152" y2="420" stroke="#222" stroke-width="1.3"/>
<line x1="208.8" y1="420" x2="222.5" y2="420" stroke="#222" stroke-width="1.3"/>
<line x1="121" y1="420" x2="131" y2="420" stroke="#777" stroke-width="1"/>
<line x1="158" y1="420" x2="166" y2="420" stroke="#777" stroke-width="1"/>
<line x1="187" y1="420" x2="199" y2="420" stroke="#777" stroke-width="1"/>
<line x1="226" y1="420" x2="236" y2="420" stroke="#777" stroke-width="1"/>
<line x1="83" y1="418.8" x2="96" y2="418.8" stroke="#000" stroke-width="0.8" stroke-dasharray="5 3"/>
<rect x="89.5" y="422.5" width="8" height="6.5" fill="none" stroke="#000" stroke-width="0.9"/>
<rect x="86.5" y="429" width="11" height="15" fill="none" stroke="#000" stroke-width="0.9"/>
<line x1="86.5" y1="436.2" x2="97.5" y2="436.2" stroke="#000" stroke-width="0.8"/>
<line x1="86.5" y1="438.5" x2="97.5" y2="438.5" stroke="#000" stroke-width="0.8"/>
<line x1="86.5" y1="440.8" x2="97.5" y2="440.8" stroke="#000" stroke-width="0.8"/>
<rect x="239.6" y="429.4" width="11.6" height="14.4" fill="none" stroke="#000" stroke-width="0.9"/>
<line x1="247.5" y1="422.5" x2="247.5" y2="429.4" stroke="#000" stroke-width="1.4"/>
<line x1="245" y1="429.4" x2="250.5" y2="429.4" stroke="#000" stroke-width="1.4"/>
<line x1="239.6" y1="436.2" x2="251.2" y2="436.2" stroke="#000" stroke-width="0.8"/>
<line x1="239.6" y1="438.5" x2="251.2" y2="438.5" stroke="#000" stroke-width="0.8"/>
<line x1="239.6" y1="440.8" x2="251.2" y2="440.8" stroke="#000" stroke-width="0.8"/>
<line x1="101" y1="429.7" x2="238" y2="429.7" stroke="#000" stroke-width="1" stroke-dasharray="7.5 6.5"/>
<line x1="101" y1="443.9" x2="238" y2="443.9" stroke="#000" stroke-width="1" stroke-dasharray="7.5 6.5"/>
<line x1="101" y1="436.5" x2="168" y2="436.5" stroke="#000" stroke-width="1" stroke-dasharray="7.5 6.5"/>
<line x1="101" y1="438.9" x2="168" y2="438.9" stroke="#000" stroke-width="1" stroke-dasharray="7.5 6.5"/>
<line x1="171" y1="436.7" x2="238" y2="436.7" stroke="#000" stroke-width="1" stroke-dasharray="7.5 6.5"/>
<line x1="171" y1="440.5" x2="238" y2="440.5" stroke="#000" stroke-width="1" stroke-dasharray="7.5 6.5"/>
<line x1="97.5" y1="434.5" x2="168.8" y2="434.5" stroke="#000" stroke-width="0.9"/>
<line x1="168.8" y1="438" x2="215" y2="438" stroke="#000" stroke-width="1.2"/>
<line x1="97.5" y1="423" x2="97.5" y2="567.5" stroke="#000" stroke-width="1" stroke-dasharray="10 1.5 1 1.5"/>
<line x1="239.6" y1="423" x2="239.6" y2="568" stroke="#000" stroke-width="1" stroke-dasharray="1.5 1.5"/>
<line x1="97.5" y1="446.3" x2="168.8" y2="446.3" stroke="#000" stroke-width="0.9"/>
<line x1="97.5" y1="458.17" x2="168.8" y2="458.17" stroke="#000" stroke-width="0.9"/>
<line x1="97.5" y1="470.04" x2="168.8" y2="470.04" stroke="#000" stroke-width="0.9"/>
<line x1="97.5" y1="481.91" x2="168.8" y2="481.91" stroke="#000" stroke-width="0.9"/>
<line x1="97.5" y1="493.78" x2="168.8" y2="493.78" stroke="#000" stroke-width="0.9"/>
<line x1="97.5" y1="505.65" x2="168.8" y2="505.65" stroke="#000" stroke-width="0.9"/>
<line x1="97.5" y1="517.52" x2="168.8" y2="517.52" stroke="#000" stroke-width="0.9"/>
<line x1="97.5" y1="529.39" x2="168.8" y2="529.39" stroke="#000" stroke-width="0.9"/>
<line x1="97.5" y1="541.26" x2="168.8" y2="541.26" stroke="#000" stroke-width="0.9"/>
<line x1="168.8" y1="446.3" x2="168.8" y2="541.3" stroke="#000" stroke-width="0.9"/>
<line x1="168.8" y1="408" x2="168.8" y2="572.5" stroke="#000" stroke-width="0.9" stroke-dasharray="27 2 2 2"/>
<line x1="177.6" y1="423" x2="177.6" y2="554" stroke="#000" stroke-width="1"/>
<line x1="183.8" y1="423" x2="183.8" y2="554" stroke="#000" stroke-width="1"/>
<line x1="180.7" y1="424" x2="180.7" y2="553" stroke="#000" stroke-width="0.9" stroke-dasharray="7 3"/>
<line x1="201.3" y1="423" x2="201.3" y2="554" stroke="#000" stroke-width="1"/>
<line x1="207.5" y1="423" x2="207.5" y2="554" stroke="#000" stroke-width="1"/>
<line x1="204.4" y1="424" x2="204.4" y2="553" stroke="#000" stroke-width="0.9" stroke-dasharray="7 3"/>
<line x1="176" y1="429.4" x2="185.5" y2="429.4" stroke="#000" stroke-width="1.4"/>
<line x1="133.1" y1="424" x2="133.1" y2="429.3" stroke="#000" stroke-width="1"/>
<line x1="130.8" y1="429.3" x2="135.4" y2="429.3" stroke="#000" stroke-width="1.4"/>
<line x1="168.8" y1="485.2" x2="207.5" y2="485.2" stroke="#000" stroke-width="1"/>
<line x1="168.8" y1="490.6" x2="207.5" y2="490.6" stroke="#000" stroke-width="1"/>
<line x1="200.5" y1="487.8" x2="208" y2="487.8" stroke="#000" stroke-width="2"/>
<line x1="176" y1="487.8" x2="185" y2="487.8" stroke="#000" stroke-width="1.4"/>
<line x1="176.5" y1="438.4" x2="185" y2="438.4" stroke="#000" stroke-width="1.6"/>
<line x1="200.3" y1="438.4" x2="208.5" y2="438.4" stroke="#000" stroke-width="1.6"/>
<line x1="16.3" y1="417.8" x2="16.3" y2="564.6" stroke="#000" stroke-width="1"/>
<polygon points="16.3,417.8 15.15,421 17.45,421" fill="#000"/>
<polygon points="16.3,564.6 15.15,561.4 17.45,561.4" fill="#000"/>
<line x1="16.3" y1="564.6" x2="16.3" y2="577.5" stroke="#000" stroke-width="1"/>
<polygon points="16.3,564.6 15.15,567.8 17.45,567.8" fill="#000"/>
<line x1="27.5" y1="417.8" x2="27.5" y2="558.8" stroke="#000" stroke-width="1"/>
<polygon points="27.5,417.8 26.35,421 28.65,421" fill="#000"/>
<polygon points="27.5,558.8 26.35,555.6 28.65,555.6" fill="#000"/>
<polygon points="27.5,441.3 26.35,444.5 28.65,444.5" fill="#000"/>
<polygon points="27.5,441.3 26.35,438.1 28.65,438.1" fill="#000"/>
<polygon points="27.5,488 26.35,491.2 28.65,491.2" fill="#000"/>
<polygon points="27.5,488 26.35,484.8 28.65,484.8" fill="#000"/>
<line x1="38.8" y1="488" x2="38.8" y2="551.8" stroke="#000" stroke-width="1"/>
<polygon points="38.8,488 37.65,491.2 39.95,491.2" fill="#000"/>
<polygon points="38.8,551.8 37.65,548.6 39.95,548.6" fill="#000"/>
<line x1="38.8" y1="551.8" x2="38.8" y2="571" stroke="#000" stroke-width="1"/>
<line x1="27.5" y1="441.3" x2="86.3" y2="441.3" stroke="#000" stroke-width="1"/>
<polygon points="86.5,441.3 83.3,440.15 83.3,442.45" fill="#000"/>
<line x1="27.5" y1="488" x2="96.3" y2="488" stroke="#000" stroke-width="1"/>
<circle cx="41.3" cy="422.6" r="1.5" fill="#000"/>
<line x1="39.8" y1="417.8" x2="39.8" y2="441.3" stroke="#000" stroke-width="1"/>
<polygon points="39.8,441.3 38.65,438.1 40.95,438.1" fill="#000"/>
<polygon points="39.8,417.8 38.65,421 40.95,421" fill="#000"/>
<text x="14.5" y="490" font-size="4" text-anchor="middle" font-weight="bold" letter-spacing="0.6" transform="rotate(-90 14.5 490)" fill="#000">5800</text>
<text x="25.9" y="429" font-size="4" text-anchor="middle" font-weight="bold" letter-spacing="0.6" transform="rotate(-90 25.9 429)" fill="#000">1000</text>
<text x="37.1" y="430" font-size="4" text-anchor="middle" font-weight="bold" letter-spacing="0.6" transform="rotate(-90 37.1 430)" fill="#000">700</text>
<text x="25.9" y="465" font-size="4" text-anchor="middle" font-weight="bold" letter-spacing="0.6" transform="rotate(-90 25.9 465)" fill="#000">2000</text>
<text x="25.9" y="525" font-size="4" text-anchor="middle" font-weight="bold" letter-spacing="0.6" transform="rotate(-90 25.9 525)" fill="#000">2800</text>
<text x="37.1" y="520" font-size="4" text-anchor="middle" font-weight="bold" letter-spacing="0.6" transform="rotate(-90 37.1 520)" fill="#000">2700</text>
<text x="37.1" y="553" font-size="3.6" text-anchor="middle" font-weight="bold" letter-spacing="0.6" transform="rotate(-90 37.1 553)" fill="#000">100</text>
<text x="37.1" y="566" font-size="3.6" text-anchor="middle" font-weight="bold" letter-spacing="0.6" transform="rotate(-90 37.1 566)" fill="#000">200</text>
<text x="14.5" y="572" font-size="3.6" text-anchor="middle" font-weight="bold" letter-spacing="0.6" transform="rotate(-90 14.5 572)" fill="#000">200</text>
<text x="47.5" y="438" font-size="5" text-anchor="start" font-weight="bold" textLength="18" lengthAdjust="spacing" fill="#000">基礎砕石</text>
<text x="47.5" y="444.8" font-size="3.8" text-anchor="start" font-weight="bold" textLength="25.5" lengthAdjust="spacing" fill="#000">t= 200 [mm]</text>
<line x1="38.8" y1="551.8" x2="240" y2="551.8" stroke="#000" stroke-width="1"/>
<line x1="38.8" y1="554.3" x2="240" y2="554.3" stroke="#000" stroke-width="1"/>
<line x1="99" y1="553" x2="168.8" y2="553" stroke="#666" stroke-width="1.5" stroke-dasharray="8 4"/>
<line x1="16.3" y1="558.8" x2="97.5" y2="558.8" stroke="#000" stroke-width="1"/>
<line x1="99" y1="558.8" x2="168.8" y2="558.8" stroke="#666" stroke-width="1.3" stroke-dasharray="8 4"/>
<line x1="168.8" y1="558.8" x2="240" y2="558.8" stroke="#000" stroke-width="1"/>
<line x1="16.3" y1="564.6" x2="168.8" y2="564.6" stroke="#000" stroke-width="1"/>
<line x1="240" y1="564.8" x2="345.5" y2="564.8" stroke="#000" stroke-width="1"/>
<line x1="178" y1="561.5" x2="178" y2="565" stroke="#000" stroke-width="0.8"/>
<line x1="180.7" y1="561.5" x2="180.7" y2="565" stroke="#000" stroke-width="0.8"/>
<line x1="183.4" y1="561.5" x2="183.4" y2="565" stroke="#000" stroke-width="0.8"/>
<line x1="202" y1="561.5" x2="202" y2="565" stroke="#000" stroke-width="0.8"/>
<line x1="204.5" y1="561.5" x2="204.5" y2="565" stroke="#000" stroke-width="0.8"/>
<line x1="207" y1="561.5" x2="207" y2="565" stroke="#000" stroke-width="0.8"/>
<line x1="121.3" y1="558" x2="121.3" y2="588.8" stroke="#000" stroke-width="1"/>
<polygon points="121.3,557.5 120.15,560.7 122.45,560.7" fill="#000"/>
<line x1="53.8" y1="588.8" x2="121.3" y2="588.8" stroke="#000" stroke-width="1"/>
<text x="54.5" y="585.2" font-size="5" text-anchor="start" font-weight="bold" textLength="18" lengthAdjust="spacing" fill="#000">基礎砕石</text>
<line x1="215.5" y1="555" x2="215.5" y2="588.8" stroke="#000" stroke-width="1"/>
<polygon points="215.5,554.5 214.35,557.7 216.65,557.7" fill="#000"/>
<line x1="215.5" y1="588.8" x2="302.5" y2="588.8" stroke="#000" stroke-width="1"/>
<text x="263.8" y="585.4" font-size="5" text-anchor="start" font-weight="bold" textLength="38.7" lengthAdjust="spacing" fill="#000">基礎コンクリート</text>
<text x="269.2" y="434" font-size="5" text-anchor="start" font-weight="bold" textLength="36.8" lengthAdjust="spacing" fill="#000">基礎コンクリート</text>
<line x1="251" y1="438" x2="307.5" y2="438" stroke="#000" stroke-width="1"/>
<polygon points="250.5,438 253.7,436.85 253.7,439.15" fill="#000"/>
<text x="269.2" y="441.6" font-size="3.8" text-anchor="start" font-weight="bold" textLength="26.5" lengthAdjust="spacing" fill="#000">t= 100 [mm]</text>
<line x1="192.5" y1="445" x2="192.5" y2="457" stroke="#000" stroke-width="1"/>
<polygon points="192.5,444.5 191.35,447.7 193.65,447.7" fill="#000"/>
<line x1="192.5" y1="457" x2="305" y2="457" stroke="#000" stroke-width="1"/>
<text x="264" y="453.6" font-size="5.2" text-anchor="start" font-weight="bold" textLength="12.7" lengthAdjust="spacing" fill="#000">腹起し</text>
<text x="264" y="460.6" font-size="4" text-anchor="start" font-weight="bold" textLength="39" lengthAdjust="spacing" fill="#000">H-250x250x9x14</text>
<line x1="185" y1="472.5" x2="305" y2="472.5" stroke="#000" stroke-width="1"/>
<polygon points="184.5,472.5 187.7,471.35 187.7,473.65" fill="#000"/>
<polygon points="209,472.5 212.2,471.35 212.2,473.65" fill="#000"/>
<text x="263.8" y="469.1" font-size="5.2" text-anchor="start" font-weight="bold" fill="#000">切</text>
<text x="272" y="469.1" font-size="5.2" text-anchor="start" font-weight="bold" fill="#000">梁</text>
<text x="264" y="476" font-size="4" text-anchor="start" font-weight="bold" textLength="42" lengthAdjust="spacing" fill="#000">H-300x300x10x15</text>
<line x1="192.5" y1="492.5" x2="192.5" y2="519.5" stroke="#000" stroke-width="1"/>
<polygon points="192.5,492 191.35,495.2 193.65,495.2" fill="#000"/>
<line x1="192.5" y1="519.5" x2="305" y2="519.5" stroke="#000" stroke-width="1"/>
<text x="264" y="516.1" font-size="5.2" text-anchor="start" font-weight="bold" textLength="12.7" lengthAdjust="spacing" fill="#000">腹起し</text>
<text x="264" y="524" font-size="4" text-anchor="start" font-weight="bold" textLength="40.5" lengthAdjust="spacing" fill="#000">H-250x250x9x14</text>
<line x1="331.4" y1="423.3" x2="331.4" y2="564.6" stroke="#000" stroke-width="1"/>
<polygon points="331.4,423.3 330.25,426.5 332.55,426.5" fill="#000"/>
<polygon points="331.4,564.6 330.25,561.4 332.55,561.4" fill="#000"/>
<polygon points="331.4,493.8 330.25,497 332.55,497" fill="#000"/>
<polygon points="331.4,493.8 330.25,490.6 332.55,490.6" fill="#000"/>
<line x1="314.2" y1="423.3" x2="343.6" y2="423.3" stroke="#000" stroke-width="1"/>
<line x1="313.8" y1="493.8" x2="331.4" y2="493.8" stroke="#000" stroke-width="1"/>
<line x1="343.1" y1="423.3" x2="343.1" y2="564.6" stroke="#000" stroke-width="1"/>
<polygon points="343.1,423.3 341.95,426.5 344.25,426.5" fill="#000"/>
<polygon points="343.1,564.6 341.95,561.4 344.25,561.4" fill="#000"/>
<text x="331.1" y="459" font-size="3.6" text-anchor="middle" font-weight="bold" letter-spacing="0.05" transform="rotate(-90 331.1 459)" fill="#000">STEP-1 [mm]</text>
<text x="336.1" y="458" font-size="4" text-anchor="middle" font-weight="bold" letter-spacing="0.6" transform="rotate(-90 336.1 458)" fill="#000">3000</text>
<text x="331.1" y="530" font-size="3.6" text-anchor="middle" font-weight="bold" letter-spacing="0.05" transform="rotate(-90 331.1 530)" fill="#000">STEP-2 [mm]</text>
<text x="336.1" y="529" font-size="4" text-anchor="middle" font-weight="bold" letter-spacing="0.6" transform="rotate(-90 336.1 529)" fill="#000">3000</text>
<text x="341.7" y="493" font-size="4" text-anchor="middle" font-weight="bold" letter-spacing="0.6" transform="rotate(-90 341.7 493)" fill="#000">6000</text>
</g>
</svg>
<div id="dlg">
 <div id="dtitle"><div class="txt"><svg class="sx" width="40.5" height="12"><text x="0" y="9" textLength="40.5" lengthAdjust="spacingAndGlyphs" style="font-size:10px;font-weight:bold">土留工形状</text></svg></div>
  <div class="abs" style="left:421px;top:4px;width:12px;height:12px;border:1px solid #fff;border-radius:2.5px;background:linear-gradient(135deg,#f0a080 0%,#e0552c 45%,#c83c14 100%)"><svg class="abs" style="left:0;top:0" width="10" height="10" viewBox="0 0 10 10"><path d="M2.3,2.3 L7.7,7.7 M7.7,2.3 L2.3,7.7" stroke="#fff" stroke-width="1.6" stroke-linecap="round"/></svg></div>
 </div>
 <div id="dbody"></div>
 <div id="dc" style="position:absolute;left:-364px;top:-297.7px;width:800px;height:600px">
<div class="grp" style="left:377.5px;top:330.3px;width:198.5px;height:158.7px"></div>
<div class="gl" style="left:380.5px;top:325.5px;width:18px"><svg class="sx" width="15" height="10"><text x="0" y="7.3" textLength="15" lengthAdjust="spacingAndGlyphs">略図</text></svg></div>
<div class="lb" style="left:386.5px;top:338.0px"><svg class="sx" width="21.5" height="10"><text x="0" y="7.3" textLength="21.5" lengthAdjust="spacingAndGlyphs">タイトル:</text></svg></div>
<div class="in" style="left:423px;top:338px;width:144px;height:10.5px"><svg class="sx" width="71" height="10"><text x="0" y="7.3" textLength="71" lengthAdjust="spacingAndGlyphs">ライナープレート立坑構造図</text></svg></div>
<div class="abs" style="left:387.3px;top:357.3px;width:177.7px;height:122px;background:#fff;border-left:1px solid #848284;border-top:1px solid #848284;border-right:1px solid #fff;border-bottom:1px solid #fff"></div>
<svg class="abs" style="left:0;top:0" width="800" height="600" viewBox="0 0 800 600"><line x1="503.8" y1="375.8" x2="521.4" y2="375.8" stroke="#111" stroke-width="0.8"/>
<line x1="503.8" y1="374" x2="503.8" y2="400.7" stroke="#111" stroke-width="0.8"/>
<line x1="521.4" y1="374" x2="521.4" y2="400.7" stroke="#111" stroke-width="0.8"/>
<polygon points="503.8,375.8 506.40000000000003,375.0 506.40000000000003,376.6" fill="#111"/>
<polygon points="521.4,375.8 518.8,375.0 518.8,376.6" fill="#111"/>
<text x="512.6" y="372" font-size="6.5" text-anchor="middle" fill="#111" font-family="Liberation Sans, sans-serif">b1</text>
<line x1="408" y1="400.7" x2="544.5" y2="400.7" stroke="#111" stroke-width="0.8"/>
<text x="435" y="398.6" font-size="5.5" text-anchor="middle" fill="#111" font-family="Liberation Sans, sans-serif">GL</text>
<rect x="439.2" y="400.7" width="73.8" height="5.8" fill="#fff" stroke="#111" stroke-width="1.3"/>
<rect x="445.8" y="416.2" width="6.4" height="52.8" rx="2" fill="#fff" stroke="#111" stroke-width="1.3"/>
<line x1="449.0" y1="397" x2="449.0" y2="471.5" stroke="#111" stroke-width="0.7" stroke-dasharray="3 3"/>
<rect x="500.8" y="416.2" width="6.4" height="52.8" rx="2" fill="#fff" stroke="#111" stroke-width="1.3"/>
<line x1="504.0" y1="397" x2="504.0" y2="471.5" stroke="#111" stroke-width="0.7" stroke-dasharray="3 3"/>
<line x1="476.4" y1="394" x2="476.4" y2="471" stroke="#111" stroke-width="0.8" stroke-dasharray="5 3 1 3"/>
<line x1="427.2" y1="436.4" x2="449" y2="436.4" stroke="#111" stroke-width="0.8"/>
<line x1="449" y1="436.4" x2="504" y2="436.4" stroke="#111" stroke-width="1.6"/>
<line x1="427.2" y1="443.8" x2="449" y2="443.8" stroke="#111" stroke-width="0.8"/>
<line x1="449" y1="443.8" x2="504" y2="443.8" stroke="#111" stroke-width="1.6"/>
<line x1="427.2" y1="452.1" x2="449" y2="452.1" stroke="#111" stroke-width="0.8"/>
<line x1="449" y1="452.1" x2="504" y2="452.1" stroke="#111" stroke-width="1.6"/>
<line x1="408.8" y1="400.7" x2="408.8" y2="452.1" stroke="#111" stroke-width="0.8"/>
<polygon points="408.8,400.7 408.0,403.3 409.6,403.3" fill="#111"/>
<polygon points="408.8,452.1 408.0,449.5 409.6,449.5" fill="#111"/>
<line x1="407" y1="452.1" x2="446" y2="452.1" stroke="#111" stroke-width="0.8"/>
<text x="406.6" y="426" font-size="6.5" text-anchor="middle" transform="rotate(-90 406.6 426)" fill="#111" font-family="Liberation Sans, sans-serif">H</text>
<line x1="418.4" y1="387" x2="418.4" y2="411" stroke="#111" stroke-width="0.8"/>
<polygon points="418.4,400.7 417.59999999999997,398.09999999999997 419.2,398.09999999999997" fill="#111"/>
<polygon points="418.4,406.5 417.59999999999997,409.1 419.2,409.1" fill="#111"/>
<line x1="416.4" y1="406.5" x2="439.6" y2="406.5" stroke="#111" stroke-width="0.8"/>
<text x="415.4" y="392" font-size="5.2" text-anchor="middle" transform="rotate(-90 415.4 392)" fill="#111" font-family="Liberation Sans, sans-serif">H0</text>
<line x1="427.2" y1="436.4" x2="427.2" y2="452.1" stroke="#111" stroke-width="0.8"/>
<polygon points="427.2,436.4 426.5,438.4 427.9,438.4" fill="#111"/>
<polygon points="427.2,443.8 426.5,441.8 427.9,441.8" fill="#111"/>
<polygon points="427.2,452.1 426.5,450.1 427.9,450.1" fill="#111"/>
<text x="423.2" y="440.4" font-size="5" text-anchor="middle" transform="rotate(-90 423.2 440.4)" fill="#111" font-family="Liberation Sans, sans-serif">h1</text>
<text x="423.2" y="448.6" font-size="5" text-anchor="middle" transform="rotate(-90 423.2 448.6)" fill="#111" font-family="Liberation Sans, sans-serif">h2</text>
<line x1="544.1" y1="400.7" x2="544.1" y2="469" stroke="#111" stroke-width="0.8"/>
<polygon points="544.1,400.7 543.3000000000001,403.3 544.9,403.3" fill="#111"/>
<polygon points="544.1,416.4 543.3000000000001,413.79999999999995 544.9,413.79999999999995" fill="#111"/>
<polygon points="544.1,416.4 543.3000000000001,419.0 544.9,419.0" fill="#111"/>
<polygon points="544.1,469 543.3000000000001,466.4 544.9,466.4" fill="#111"/>
<line x1="507.2" y1="416.4" x2="546" y2="416.4" stroke="#111" stroke-width="0.8"/>
<line x1="507.2" y1="469" x2="546" y2="469" stroke="#111" stroke-width="0.8"/>
<text x="540.2" y="408.5" font-size="5.5" text-anchor="middle" transform="rotate(-90 540.2 408.5)" fill="#111" font-family="Liberation Sans, sans-serif">H2</text>
<text x="540.2" y="442.5" font-size="5.5" text-anchor="middle" transform="rotate(-90 540.2 442.5)" fill="#111" font-family="Liberation Sans, sans-serif">H1</text></svg>
<div class="grp" style="left:377.5px;top:496.5px;width:198.5px;height:65.89999999999998px"></div>
<div class="gl" style="left:380.5px;top:491.7px;width:47px"><svg class="sx" width="44" height="10"><text x="0" y="7.3" textLength="44" lengthAdjust="spacingAndGlyphs">路面覆工タイプ</text></svg></div>
<div class="chk on" style="left:387.3px;top:507.9px"></div>
<div class="lb" style="left:396.5px;top:507.0px"><svg class="sx" width="47.8" height="10"><text x="0" y="7.3" textLength="47.8" lengthAdjust="spacingAndGlyphs">路面覆工を行う。</text></svg></div>
<div class="lb" style="left:397px;top:518.4px"><svg class="sx" width="63.8" height="10"><text x="0" y="7.3" textLength="63.8" lengthAdjust="spacingAndGlyphs">路面覆工の配置方向:</text></svg></div>
<div class="cmb" style="left:473.5px;top:518.3px;width:92.79999999999995px"><svg class="sx" width="33" height="10"><text x="0" y="7.3" textLength="33" lengthAdjust="spacingAndGlyphs">X方向配置</text></svg><i></i></div>
<div class="lb" style="left:397px;top:531.4px"><svg class="sx" width="42.6" height="10"><text x="0" y="7.3" textLength="42.6" lengthAdjust="spacingAndGlyphs">覆工板の規格:</text></svg></div>
<div class="cmb" style="left:473.5px;top:531.2px;width:92.79999999999995px"><svg class="sx" width="42" height="10"><text x="0" y="7.3" textLength="42" lengthAdjust="spacingAndGlyphs">鋼製&nbsp; 長さ 2m</text></svg><i></i></div>
<div class="chk dis" style="left:407.5px;top:546.5px"></div>
<div class="lb dis" style="left:417.6px;top:545.6px"><svg class="sx" width="76.2" height="10"><text x="0" y="7.3" textLength="76.2" lengthAdjust="spacingAndGlyphs">幅750mmの覆工板を使用。</text></svg></div>
<div class="grp" style="left:587px;top:330.3px;width:198px;height:149.7px"></div>
<div class="gl" style="left:589.5px;top:325.5px;width:40px"><svg class="sx" width="37" height="10"><text x="0" y="7.3" textLength="37" lengthAdjust="spacingAndGlyphs">土留工形状</text></svg></div>
<div class="lb" style="left:596.5px;top:337.5px"><svg class="sx" width="34.4" height="10"><text x="0" y="7.3" textLength="34.4" lengthAdjust="spacingAndGlyphs">地盤高 GL:</text></svg></div>
<div class="in" style="left:712.8px;top:337.4px;width:62.0px;height:10.5px"><svg class="sx" width="9" height="10"><text x="0" y="7.3" textLength="9" lengthAdjust="spacingAndGlyphs">GL</text></svg></div>
<div class="lb" style="left:596.5px;top:350.2px"><svg class="sx" width="57.2" height="10"><text x="0" y="7.3" textLength="57.2" lengthAdjust="spacingAndGlyphs">小判形立坑の規格:</text></svg></div>
<div class="cmb" style="left:672px;top:350.2px;width:102.79999999999995px"><svg class="sx" width="37" height="10"><text x="0" y="7.3" textLength="37" lengthAdjust="spacingAndGlyphs">2500×6111</text></svg><i></i></div>
<div class="lb" style="left:606px;top:362.5px"><svg class="sx" width="92.8" height="10"><text x="0" y="7.3" textLength="92.8" lengthAdjust="spacingAndGlyphs">立坑長辺方向のサイズ L1(mm):</text></svg></div>
<div class="in dis" style="left:712.8px;top:362.6px;width:62.0px;height:10px"><svg class="sx" width="15.5" height="10"><text x="0" y="7.3" textLength="15.5" lengthAdjust="spacingAndGlyphs">6111</text></svg></div>
<div class="lb" style="left:606px;top:375.0px"><svg class="sx" width="92.8" height="10"><text x="0" y="7.3" textLength="92.8" lengthAdjust="spacingAndGlyphs">立坑短辺方向のサイズ B1(mm):</text></svg></div>
<div class="in dis" style="left:712.8px;top:375px;width:62.0px;height:10px"><svg class="sx" width="16.5" height="10"><text x="0" y="7.3" textLength="16.5" lengthAdjust="spacingAndGlyphs">2500</text></svg></div>
<div class="btn " style="left:714.2px;top:387.3px;width:60.59999999999991px;height:11.5px"><svg class="sc" width="44" height="10"><text x="0" y="7.3" textLength="44" lengthAdjust="spacingAndGlyphs">セクション構成..</text></svg></div>
<div class="lb" style="left:596.5px;top:401.0px"><svg class="sx" width="68.8" height="10"><text x="0" y="7.3" textLength="68.8" lengthAdjust="spacingAndGlyphs">立坑の掘削深さ H(mm):</text></svg></div>
<div class="in" style="left:712.8px;top:401.2px;width:62.0px;height:10px"><svg class="sx" width="16.5" height="10"><text x="0" y="7.3" textLength="16.5" lengthAdjust="spacingAndGlyphs">5200</text></svg></div>
<div class="lb" style="left:596.5px;top:413.7px"><svg class="sx" width="57.2" height="10"><text x="0" y="7.3" textLength="57.2" lengthAdjust="spacingAndGlyphs">支保工の設置段数:</text></svg></div>
<div class="in" style="left:713.2px;top:413.3px;width:31.399999999999977px;height:10.3px"><svg class="sx" width="3.8" height="10"><text x="0" y="7.3" textLength="3.8" lengthAdjust="spacingAndGlyphs">2</text></svg></div>
<div class="abs" style="left:735.3px;top:414.2px;width:8.4px;height:8.5px;background:#c3d3fb"></div>
<svg class="abs" style="left:735.3px;top:414.2px" width="8.4" height="8.5" viewBox="0 0 8.4 8.5"><path d="M2.2,3.9 L4.2,1.5 L6.2,3.9Z M2.2,5.0 L4.2,7.4 L6.2,5.0Z" fill="#33497a"/></svg>
<div class="chk on" style="left:597px;top:428.9px"></div>
<div class="lb" style="left:606px;top:428.0px"><svg class="sx" width="109.3" height="10"><text x="0" y="7.3" textLength="109.3" lengthAdjust="spacingAndGlyphs">立坑底面に基礎コンクリートを作図する。</text></svg></div>
<div class="lb" style="left:607.5px;top:439.0px"><svg class="sx" width="75.5" height="10"><text x="0" y="7.3" textLength="75.5" lengthAdjust="spacingAndGlyphs">基礎コンクリート厚 h1(mm):</text></svg></div>
<div class="in" style="left:712.8px;top:439.1px;width:62.0px;height:10px"><svg class="sx" width="12" height="10"><text x="0" y="7.3" textLength="12" lengthAdjust="spacingAndGlyphs">100</text></svg></div>
<div class="chk on" style="left:597px;top:453.5px"></div>
<div class="lb" style="left:606px;top:452.6px"><svg class="sx" width="94" height="10"><text x="0" y="7.3" textLength="94" lengthAdjust="spacingAndGlyphs">立坑底面に基礎砕石を作図する。</text></svg></div>
<div class="lb" style="left:607.5px;top:463.7px"><svg class="sx" width="60" height="10"><text x="0" y="7.3" textLength="60" lengthAdjust="spacingAndGlyphs">基礎砕石厚 h2(mm):</text></svg></div>
<div class="in" style="left:712.8px;top:463.9px;width:62.0px;height:10px"><svg class="sx" width="12" height="10"><text x="0" y="7.3" textLength="12" lengthAdjust="spacingAndGlyphs">200</text></svg></div>
<div class="grp" style="left:587px;top:489px;width:198px;height:73.39999999999998px"></div>
<div class="gl" style="left:589.5px;top:484.2px;width:39.3px"><svg class="sx" width="36.3" height="10"><text x="0" y="7.3" textLength="36.3" lengthAdjust="spacingAndGlyphs">ライナー形状</text></svg></div>
<div class="lb" style="left:596.5px;top:495.2px"><svg class="sx" width="77.5" height="10"><text x="0" y="7.3" textLength="77.5" lengthAdjust="spacingAndGlyphs">ライナープレートの形状タイプ:</text></svg></div>
<div class="cmb" style="left:689.5px;top:495px;width:85.29999999999995px"><svg class="sx" width="38" height="10"><text x="0" y="7.3" textLength="38" lengthAdjust="spacingAndGlyphs">支保工タイプ</text></svg><i></i></div>
<div class="chk on dis" style="left:607.3px;top:509.69999999999993px"></div>
<div class="lb dis" style="left:616.3px;top:508.79999999999995px"><svg class="sx" width="132" height="10"><text x="0" y="7.3" textLength="132" lengthAdjust="spacingAndGlyphs">ライナープレートの最上部補剛リングを省略する。</text></svg></div>
<div class="chk on dis" style="left:607.3px;top:520.6999999999999px"></div>
<div class="lb dis" style="left:616.3px;top:519.8px"><svg class="sx" width="132" height="10"><text x="0" y="7.3" textLength="132" lengthAdjust="spacingAndGlyphs">ライナープレートの最下部補剛リングを省略する。</text></svg></div>
<div class="lb" style="left:596.5px;top:533.3px"><svg class="sx" width="102.3" height="10"><text x="0" y="7.3" textLength="102.3" lengthAdjust="spacingAndGlyphs">ライナープレートの天端位置 H2(mm):</text></svg></div>
<div class="in" style="left:712.8px;top:533.4px;width:62.0px;height:10px"><svg class="sx" width="12" height="10"><text x="0" y="7.3" textLength="12" lengthAdjust="spacingAndGlyphs">200</text></svg></div>
<div class="lb" style="left:596.5px;top:545.7px"><svg class="sx" width="78.4" height="10"><text x="0" y="7.3" textLength="78.4" lengthAdjust="spacingAndGlyphs">地盤線の作図長さ b1(mm):</text></svg></div>
<div class="in" style="left:712.8px;top:545.8px;width:62.0px;height:10px"><svg class="sx" width="8" height="10"><text x="0" y="7.3" textLength="8" lengthAdjust="spacingAndGlyphs">30</text></svg></div>
<div class="abs" style="left:372px;top:572.2px;width:417px;height:0;border-top:1px solid #d0cdbb;border-bottom:1px solid #f8f6ec"></div>
<div class="btn " style="left:411.3px;top:581.3px;width:41.5px;height:11.5px"><svg class="sc" width="15.6" height="10"><text x="0" y="7.3" textLength="15.6" lengthAdjust="spacingAndGlyphs">開く..</text></svg></div>
<div class="btn " style="left:452.3px;top:581.3px;width:9.5px;height:11.5px"></div>
<div class="abs" style="left:454.9px;top:586px;width:0;height:0;border-left:2.2px solid transparent;border-right:2.2px solid transparent;border-top:2.6px solid #000"></div>
<div class="lb dis" style="left:479px;top:582.0px"><svg class="sx" width="16.5" height="10"><text x="0" y="7.3" textLength="16.5" lengthAdjust="spacingAndGlyphs">保存..</text></svg></div>
<div class="btn " style="left:514px;top:581.3px;width:50.39999999999998px;height:11.5px"><svg class="sc" width="31.5" height="10"><text x="0" y="7.3" textLength="31.5" lengthAdjust="spacingAndGlyphs">プロパティ..</text></svg></div>
<div class="lb dis" style="left:584px;top:582.0px"><svg class="sx" width="26" height="10"><text x="0" y="7.3" textLength="26" lengthAdjust="spacingAndGlyphs">&lt; 戻る(B)</text></svg></div>
<div class="btn def" style="left:624px;top:581.3px;width:49.60000000000002px;height:11.5px"><svg class="sc" width="27.5" height="10"><text x="0" y="7.3" textLength="27.5" lengthAdjust="spacingAndGlyphs">次へ(N) &gt;</text></svg></div>
<div class="btn " style="left:682.3px;top:581.3px;width:49.60000000000002px;height:11.5px"><svg class="sc" width="28.8" height="10"><text x="0" y="7.3" textLength="28.8" lengthAdjust="spacingAndGlyphs">キャンセル</text></svg></div>
<div class="btn " style="left:741px;top:581.3px;width:49.5px;height:11.5px"><svg class="sc" width="18" height="10"><text x="0" y="7.3" textLength="18" lengthAdjust="spacingAndGlyphs">ヘルプ</text></svg></div>
 </div>
</div>
</body></html>
